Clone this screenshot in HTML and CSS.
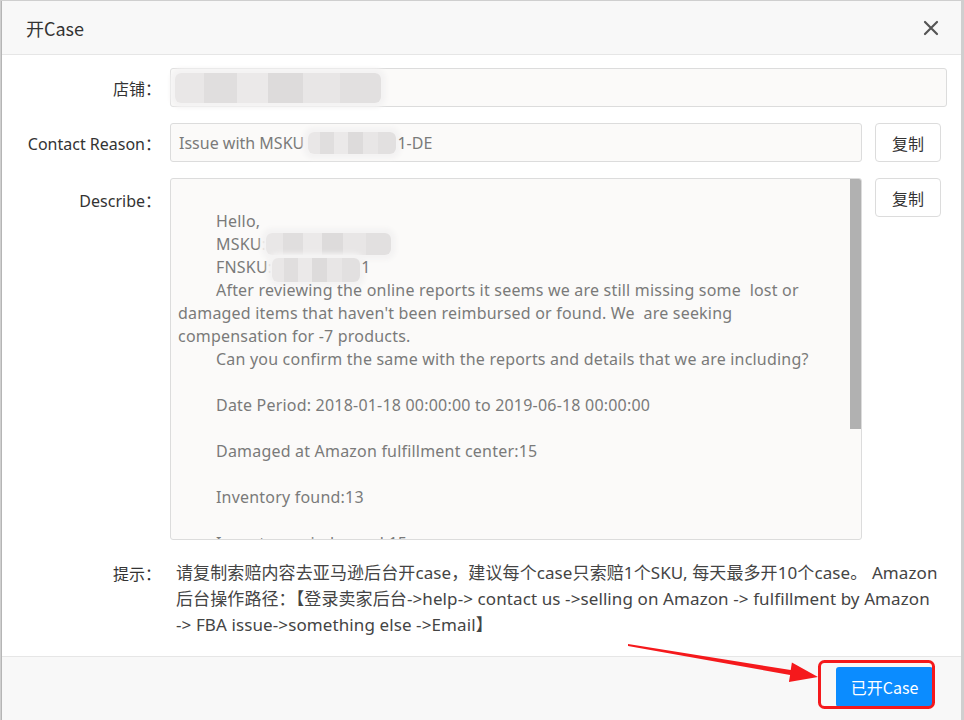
FILE: index.html
```html
<!DOCTYPE html>
<html lang="zh">
<head>
<meta charset="utf-8">
<title>开Case</title>
<link rel="stylesheet" href="styles.css">
</head>
<body>
<div class="dialog">
  <div class="dlg-header">
    <span class="dlg-title">开Case</span>
    <span class="dlg-close" aria-label="close">
      <svg width="16" height="16" viewBox="0 0 16 16"><path d="M2 2 L14 14 M14 2 L2 14" stroke="#555" stroke-width="2.2" stroke-linecap="round" fill="none"/></svg>
    </span>
  </div>
  <div class="dlg-body">
    <div class="row">
      <label class="lbl">店铺：</label>
      <div class="field input wide"><span class="redact rd-shop"></span></div>
    </div>
    <div class="row">
      <label class="lbl">Contact Reason：</label>
      <div class="field input">Issue with MSKU <span class="redact rd-msku"></span>1-DE</div>
      <button class="btn-copy">复制</button>
    </div>
    <div class="row row-top">
      <label class="lbl lbl-top">Describe：</label>
      <div class="field area">
        <div class="area-text">
          <div class="ln"> </div>
          <div class="ln ind">Hello,</div>
          <div class="ln ind">MSKU:<span class="redact rd-m2"></span></div>
          <div class="ln ind">FNSKU:<span class="redact rd-f2"></span>1</div>
          <div class="ln ind">After reviewing the online reports it seems we are still missing some  lost or</div>
          <div class="ln">damaged items that haven't been reimbursed or found. We  are seeking</div>
          <div class="ln">compensation for -7 products.</div>
          <div class="ln ind">Can you confirm the same with the reports and details that we are including?</div>
          <div class="ln"> </div>
          <div class="ln ind">Date Period: 2018-01-18 00:00:00 to 2019-06-18 00:00:00</div>
          <div class="ln"> </div>
          <div class="ln ind">Damaged at Amazon fulfillment center:15</div>
          <div class="ln"> </div>
          <div class="ln ind">Inventory found:13</div>
          <div class="ln"> </div>
          <div class="ln ind">Inventory reimbursed:15</div>
          <div class="ln"> </div>
          <div class="ln ind">Thank you.</div>
        </div>
        <div class="thumb"></div>
      </div>
      <button class="btn-copy">复制</button>
    </div>
    <div class="row tip-row">
      <label class="lbl">提示：</label>
      <div class="tip">
        <div class="tl">请复制索赔内容去亚马逊后台开case，建议每个case只索赔1个SKU, 每天最多开10个case。 Amazon</div>
        <div class="tl">后台操作路径：【登录卖家后台-&gt;help-&gt; contact us -&gt;selling on Amazon -&gt; fulfillment by Amazon</div>
        <div class="tl">-&gt; FBA issue-&gt;something else -&gt;Email】</div>
      </div>
    </div>
  </div>
  <div class="dlg-footer">
    <button class="btn-primary">已开Case</button>
  </div>
</div>
<svg class="annot" width="964" height="720" viewBox="0 0 964 720">
  <polygon points="628,644 790.7,670 791.9,662.5 818,677 788.9,682 790.1,675 628,646" fill="#f5191c"/>
  <rect x="819.5" y="661.5" width="114" height="46" rx="5" ry="5" fill="none" stroke="#f5191c" stroke-width="3"/>
</svg>
</body>
</html>
```
FILE: styles.css
```css
* { box-sizing: border-box; }
html, body { margin: 0; padding: 0; }
body {
  width: 964px;
  height: 720px;
  overflow: hidden;
  background: #cfcfcf;
  font-family: "Noto Sans", "Noto Sans CJK SC", sans-serif;
  font-size: 16px;
  color: #333;
  position: relative;
}
.dialog {
  margin: 1px 0 0 1px;
  width: 960px;
  height: 719px;
  overflow: hidden;
  background: #fff;
  border-left: 1px solid #b5b5b5;
  display: flex;
  flex-direction: column;
}
.dlg-header {
  height: 54px;
  flex: none;
  background: #f8f8f8;
  border-bottom: 1px solid #e6e6e6;
  display: flex;
  align-items: center;
  justify-content: space-between;
  padding: 0 22px 0 24px;
}
.dlg-title {
  font-family: "Noto Sans CJK SC", sans-serif;
  font-size: 18px;
  color: #333;
}
.dlg-close { display: flex; width: 16px; height: 16px; }
.dlg-body {
  padding: 13px 14px 0 0;
  display: flex;
  flex-direction: column;
  gap: 16px;
  height: 601px;
  flex: none;
}
.row { display: flex; align-items: center; }
.row-top { align-items: flex-start; }
.row .lbl {
  width: 168px;
  flex: none;
  text-align: right;
  padding-right: 9px;
  color: #333;
  font-family: "Noto Sans", "Noto Sans CJK SC", sans-serif;
}
.field {
  background: #fbfaf9;
  border: 1px solid #dcdcdc;
  border-radius: 3px;
  color: #7a7a7a;
}
.input {
  height: 39px;
  width: 692px;
  padding: 0 8px;
  display: flex;
  align-items: center;
  white-space: pre;
}
.input.wide { width: 779px; }
.btn-copy {
  margin-left: 13px;
  width: 66px;
  height: 39px;
  background: #fff;
  border: 1px solid #dcdcdc;
  border-radius: 4px;
  font-family: "Noto Sans CJK SC", sans-serif;
  font-size: 16px;
  color: #333;
  padding: 0;
}
.lbl-top { padding-top: 10px; }
.area {
  position: relative;
  width: 692px;
  height: 362px;
  overflow: hidden;
  padding: 8px 7px;
}
.area-text { line-height: 23px; letter-spacing: 0.2px; }
.ln { white-space: pre; height: 23px; }
.ind { padding-left: 38px; }
.thumb {
  position: absolute;
  right: -1px;
  top: 0;
  width: 12px;
  height: 250px;
  background: #b1b1b1;
}
.redact {
  display: inline-block;
  vertical-align: middle;
  background:
    linear-gradient(90deg, #e9e7e7 0 14%, #e0dede 14% 30%, #ebe9e9 30% 45%, #dddbdb 45% 62%, #e8e6e6 62% 80%, #e2e0e0 80% 100%);
  box-shadow: 0 0 4px 5px #f4f3f3;
  border-radius: 6px;
}
.rd-shop { width: 206px; height: 30px; margin-left: -4px; }
.rd-msku { width: 88px; height: 22px; margin-right: 1px; }
.rd-m2 { width: 125px; height: 22px; margin-top: -4px; }
.rd-f2 { width: 88px; height: 24px; margin-top: 2px; margin-right: 1px; }
.row.tip-row { align-items: flex-start; margin-top: 4px; }
.tip-row .lbl { line-height: 26px; padding-top: 1px; }
.tip {
  padding-left: 6px;
  line-height: 26px;
  font-size: 17px;
  letter-spacing: 0.1px;
  color: #444;
  font-family: "Noto Sans", "Noto Sans CJK SC", sans-serif;
}
.tl { white-space: nowrap; }
.dlg-footer {
  flex: 1;
  background: #f8f8f8;
  border-top: 1px solid #e6e6e6;
  display: flex;
  justify-content: flex-end;
  align-items: flex-start;
  padding: 10px 28px 0 0;
}
.btn-primary {
  width: 97px;
  height: 40px;
  background: #0b8cff;
  color: #fff;
  border: none;
  border-radius: 3px;
  font-family: "Noto Sans CJK SC", sans-serif;
  font-size: 16px;
  padding: 0;
}
.annot {
  position: absolute;
  left: 0;
  top: 0;
  pointer-events: none;
}
```
